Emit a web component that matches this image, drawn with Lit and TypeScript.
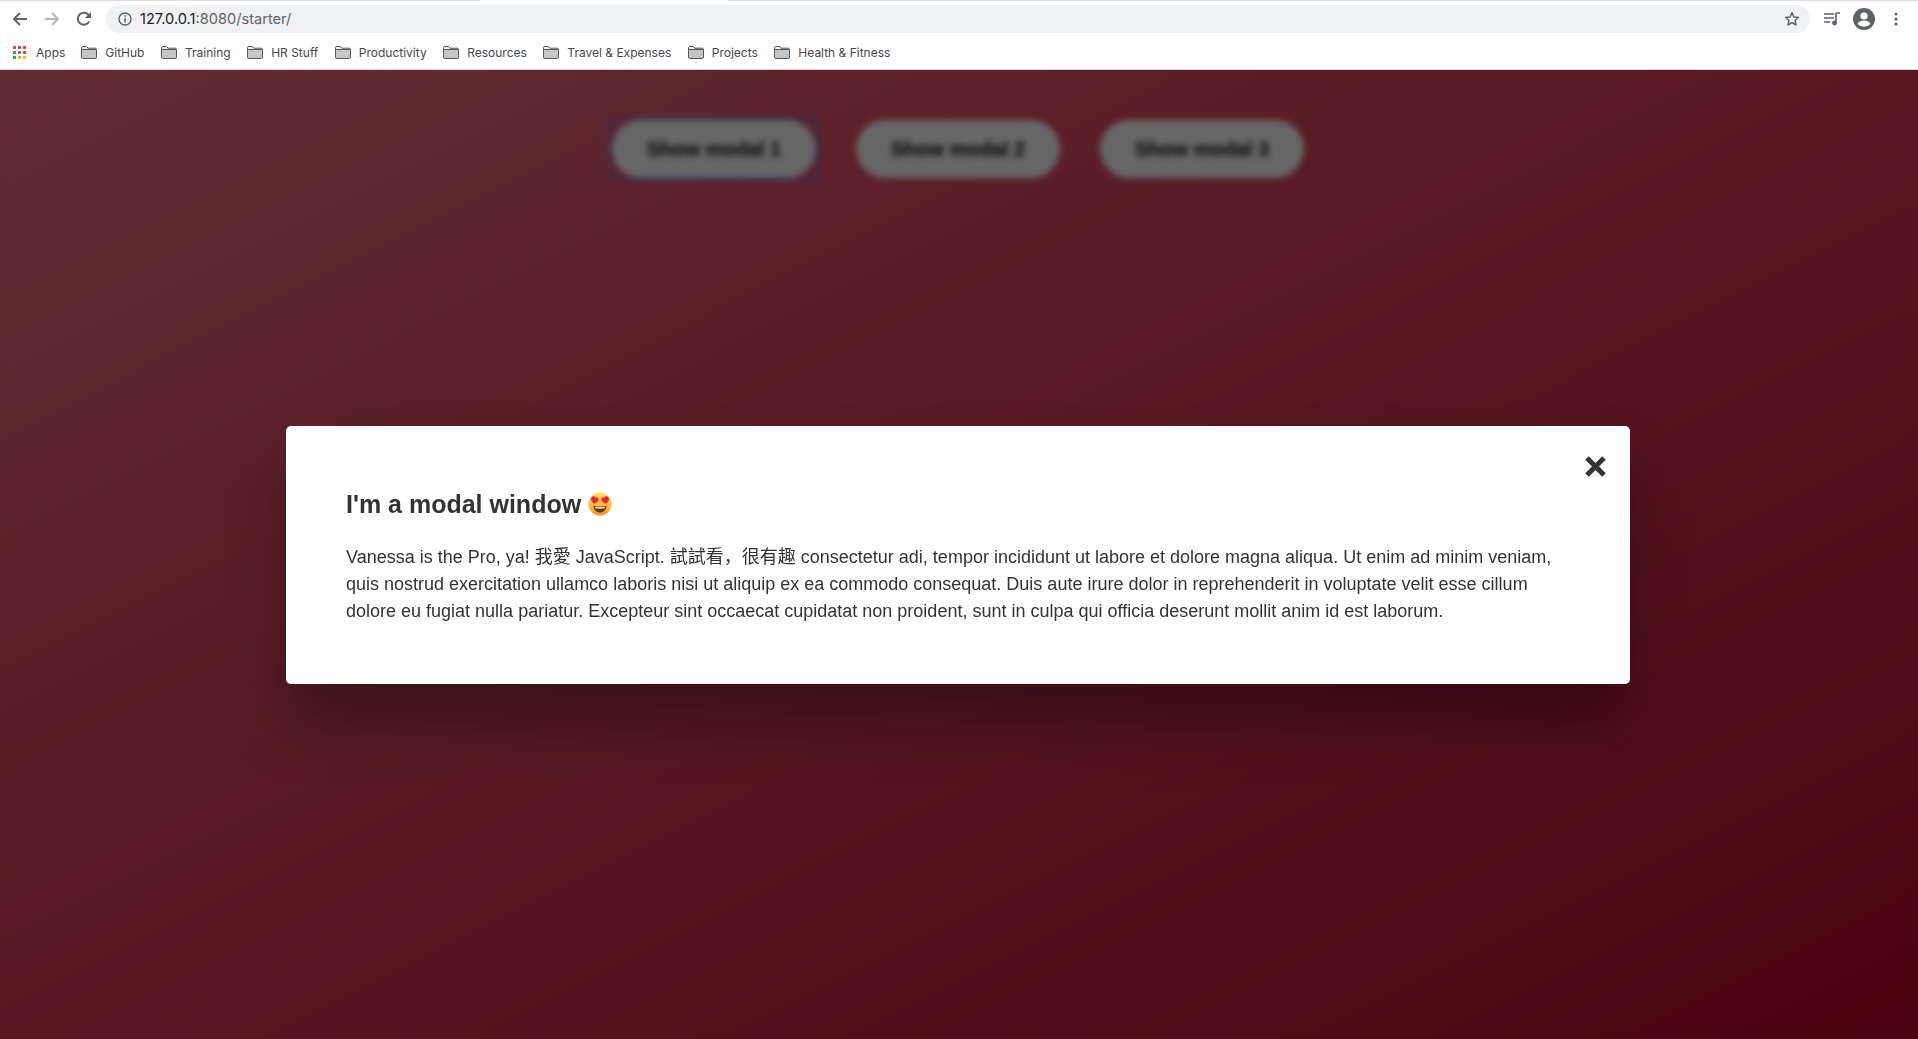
import { LitElement, html, css, svg } from 'lit';
import { customElement } from 'lit/decorators.js';

const BOOKMARKS = ['GitHub', 'Training', 'HR Stuff', 'Productivity', 'Resources', 'Travel & Expenses', 'Projects', 'Health & Fitness'];

const folderIcon = html`<svg class="folder" width="16" height="13" viewBox="0 0 16 13">
  <path d="M.5 1.800C.5 1 1 .5 1.800.5h3.700l1.600 1.700h7.100c.8 0 1.300.5 1.300 1.300v7.700c0 .8-.5 1.300-1.300 1.300H1.800c-.8 0-1.300-.5-1.300-1.300z" fill="#c6c6c6" stroke="#55585b"/>
  <path d="M1 1h4.300l1.400 2H1z" fill="#efefef"/>
  <path d="M1 3.500h14" stroke="#55585b" fill="none"/>
</svg>`;

const appsDots = ['#ea4335', '#ea4335', '#ea4335', '#34a853', '#4285f4', '#ea4335', '#34a853', '#fbbc05', '#fbbc05'];

@customElement('browser-bar')
class BrowserBar extends LitElement {
  static styles = css`
    :host { display: block; height: 70px; background: #fff; font-family: Inter, "Liberation Sans", sans-serif; box-sizing: border-box; border-bottom: 1px solid #d6d6d6; }
    .tabline { height: 1px; display: flex; background: #dee1e6; }
    .tabline i { display: block; width: 248px; margin-left: 480px; background: #fff; }
    .toolbar { height: 35px; display: flex; align-items: center; padding-left: 4px; box-sizing: border-box; }
    .nav { width: 32px; height: 24px; display: flex; align-items: center; justify-content: center; }
    .omnibox { flex: 1; height: 28px; margin-left: 6px; border-radius: 14px; background: #eff1f3; display: flex; align-items: center; padding: 0 10px 0 12px; }
    .url { margin-left: 8px; font-size: 14.6px; color: #5f6368; }
    .url b { font-weight: 400; color: #202124; }
    .star { margin-left: auto; }
    .right { display: flex; align-items: center; width: 108px; padding-left: 14px; box-sizing: border-box; gap: 13px; }
    .bookmarks { height: 33px; display: flex; align-items: center; padding-left: 13px; font-size: 12px; color: #45484c; }
    .apps { display: grid; grid-template-columns: repeat(3, 3px); gap: 2px; margin-right: 10px; }
    .apps i { width: 3px; height: 3px; display: block; }
    .item { display: flex; align-items: center; gap: 8px; margin-right: 16.5px; }
    .apps-label { margin-right: 16px; }
    .folder { display: block; }
  `;

  render() {
    return html`
      <div class="tabline"><i></i></div>
      <div class="toolbar">
        <div class="nav"><svg width="16" height="16" viewBox="0 0 16 16"><path d="M15 8H2M8 2 2 8l6 6" fill="none" stroke="#5f6368" stroke-width="2"/></svg></div>
        <div class="nav"><svg width="16" height="16" viewBox="0 0 16 16"><path d="M1 8h13M8 2l6 6-6 6" fill="none" stroke="#b4b6b9" stroke-width="2"/></svg></div>
        <div class="nav"><svg width="16" height="16" viewBox="0 0 16 16"><path d="M13.200 10.400A6 6 0 1 1 13 4.700" fill="none" stroke="#5f6368" stroke-width="2"/><path d="M15 1v6H9z" fill="#5f6368"/></svg></div>
        <div class="omnibox">
          <svg width="14" height="14" viewBox="0 0 14 14"><circle cx="7" cy="7" r="6" fill="none" stroke="#5f6368" stroke-width="1.400"/><path d="M7 6v4.500M7 3.300v1.500" stroke="#5f6368" stroke-width="1.500"/></svg>
          <span class="url"><b>127.0.0.1</b>:8080/starter/</span>
          <svg class="star" width="16" height="16" viewBox="0 0 16 16"><path d="m8 1.800 1.900 4.200 4.500.5-3.400 3 1 4.500L8 11.700l-4 2.300 1-4.500-3.400-3 4.500-.5z" fill="none" stroke="#5f6368" stroke-width="1.500" stroke-linejoin="round"/></svg>
        </div>
        <div class="right">
          <svg width="16" height="14" viewBox="0 0 16 14"><path d="M0 2h10M0 6h10M0 10h6" stroke="#5f6368" stroke-width="1.500"/><path d="M12 1h4M12 1v10" stroke="#5f6368" stroke-width="1.600"/><circle cx="10.500" cy="11" r="2.400" fill="#5f6368"/></svg>
          <svg width="22" height="22" viewBox="0 0 22 22"><circle cx="11" cy="11" r="11" fill="#5f6368"/><circle cx="11" cy="8" r="3.600" fill="#fff"/><path d="M4.500 16c1.500-2.600 4-3.400 6.500-3.400s5 .8 6.500 3.400a8.800 8.800 0 0 1-13 0z" fill="#fff"/></svg>
          <svg width="16" height="16" viewBox="0 0 16 16"><circle cx="8" cy="3" r="1.500" fill="#5f6368"/><circle cx="8" cy="8" r="1.500" fill="#5f6368"/><circle cx="8" cy="13" r="1.500" fill="#5f6368"/></svg>
        </div>
      </div>
      <div class="bookmarks">
        <div class="apps">${appsDots.map((c) => html`<i style="background:${c}"></i>`)}</div>
        <span class="apps-label">Apps</span>
        ${BOOKMARKS.map((b) => html`<div class="item">${folderIcon}<span>${b}</span></div>`)}
      </div>
    `;
  }
}

const heartEyes = svg`
  <defs><linearGradient id="face" x1="0" y1="0" x2="0" y2="1"><stop offset="0" stop-color="#ffdd55"/><stop offset="1" stop-color="#f59a23"/></linearGradient></defs>
  <circle cx="12" cy="12" r="11.500" fill="url(#face)"/>
  <path d="M6.800 5.200c1.300-1 3-.4 3.400 1 1.300-.6 2.800.2 2.900 1.700.1 1.900-2.300 3.500-4.500 4.100-1.800-1.300-3.500-3.400-3-5.100.2-.8.500-1.300 1.200-1.700z" fill="#e8233a" transform="translate(-2.500 -.5)"/>
  <path d="M17.200 5.200c-1.300-1-3-.4-3.400 1-1.300-.6-2.800.2-2.900 1.700-.1 1.900 2.300 3.500 4.500 4.100 1.800-1.300 3.500-3.400 3-5.100-.2-.8-.5-1.300-1.200-1.700z" fill="#e8233a" transform="translate(2.500 -.5)"/>
  <path d="M5.500 13.800c4 1.200 9 1.200 13 0-.3 4-3 6.800-6.500 6.800s-6.200-2.800-6.500-6.800z" fill="#5b3410"/>
  <path d="M7 14.700c3.300.8 6.700.8 10 0l-.3 1.500c-3 .6-6.400.6-9.400 0z" fill="#fff"/>
`;

@customElement('app-root')
class AppRoot extends LitElement {
  static styles = css`
    :host { display: block; height: 1039px; overflow: hidden; font-family: "Liberation Sans", "Noto Sans CJK SC", sans-serif; color: #333; }
    .page { position: relative; height: 969px; overflow: hidden; background: linear-gradient(to bottom right, #f76e7d 0%, #be0c28 100%); }
    .buttons { display: flex; justify-content: center; gap: 40px; padding: 50px 2px 0 0; }
    .show-modal { position: relative; width: 204px; height: 58px; border: none; border-radius: 50px; background: #fff; color: #111; font: 700 20px "Liberation Sans", sans-serif; padding: 0; }
    .show-modal.focused::after { content: ""; position: absolute; inset: -2px; border: 2px solid #4d7cff; }
    .overlay { position: absolute; inset: 0; background: rgba(0, 0, 0, 0.6); backdrop-filter: blur(3px); }
    .modal { position: absolute; left: 286px; top: 356px; width: 1344px; height: 258px; box-sizing: border-box; padding: 60px; background: #fff; border-radius: 5px; box-shadow: 0 40px 60px rgba(0, 0, 0, 0.3); }
    h1 { margin: 0 0 20px; font-size: 25px; line-height: 37.5px; font-weight: 700; display: flex; align-items: center; gap: 7px; }
    h1 svg { margin-top: -2px; }
    p { margin: 0; font-size: 18px; line-height: 27px; }
    .close { position: absolute; right: 23px; top: 29px; width: 23px; height: 23px; padding: 0; border: none; background: none; display: block; }
    .close svg { display: block; }
  `;

  render() {
    return html`
      <browser-bar></browser-bar>
      <div class="page">
        <div class="buttons">
          <button class="show-modal focused">Show modal 1</button>
          <button class="show-modal">Show modal 2</button>
          <button class="show-modal">Show modal 3</button>
        </div>
        <div class="overlay"></div>
        <div class="modal">
          <button class="close" aria-label="Close"><svg width="23" height="23" viewBox="0 0 23 23"><path d="M3 3l17 17M20 3 3 20" stroke="#333" stroke-width="5"/></svg></button>
          <h1>I'm a modal window <svg width="24" height="24" viewBox="0 0 24 24">${heartEyes}</svg></h1>
          <p>Vanessa is the Pro, ya! 我愛 JavaScript. 試試看，很有趣 consectetur adi, tempor incididunt ut labore et dolore magna aliqua. Ut enim ad minim veniam, quis nostrud exercitation ullamco laboris nisi ut aliquip ex ea commodo consequat. Duis aute irure dolor in reprehenderit in voluptate velit esse cillum dolore eu fugiat nulla pariatur. Excepteur sint occaecat cupidatat non proident, sunt in culpa qui officia deserunt mollit anim id est laborum.</p>
        </div>
      </div>
    `;
  }
}
